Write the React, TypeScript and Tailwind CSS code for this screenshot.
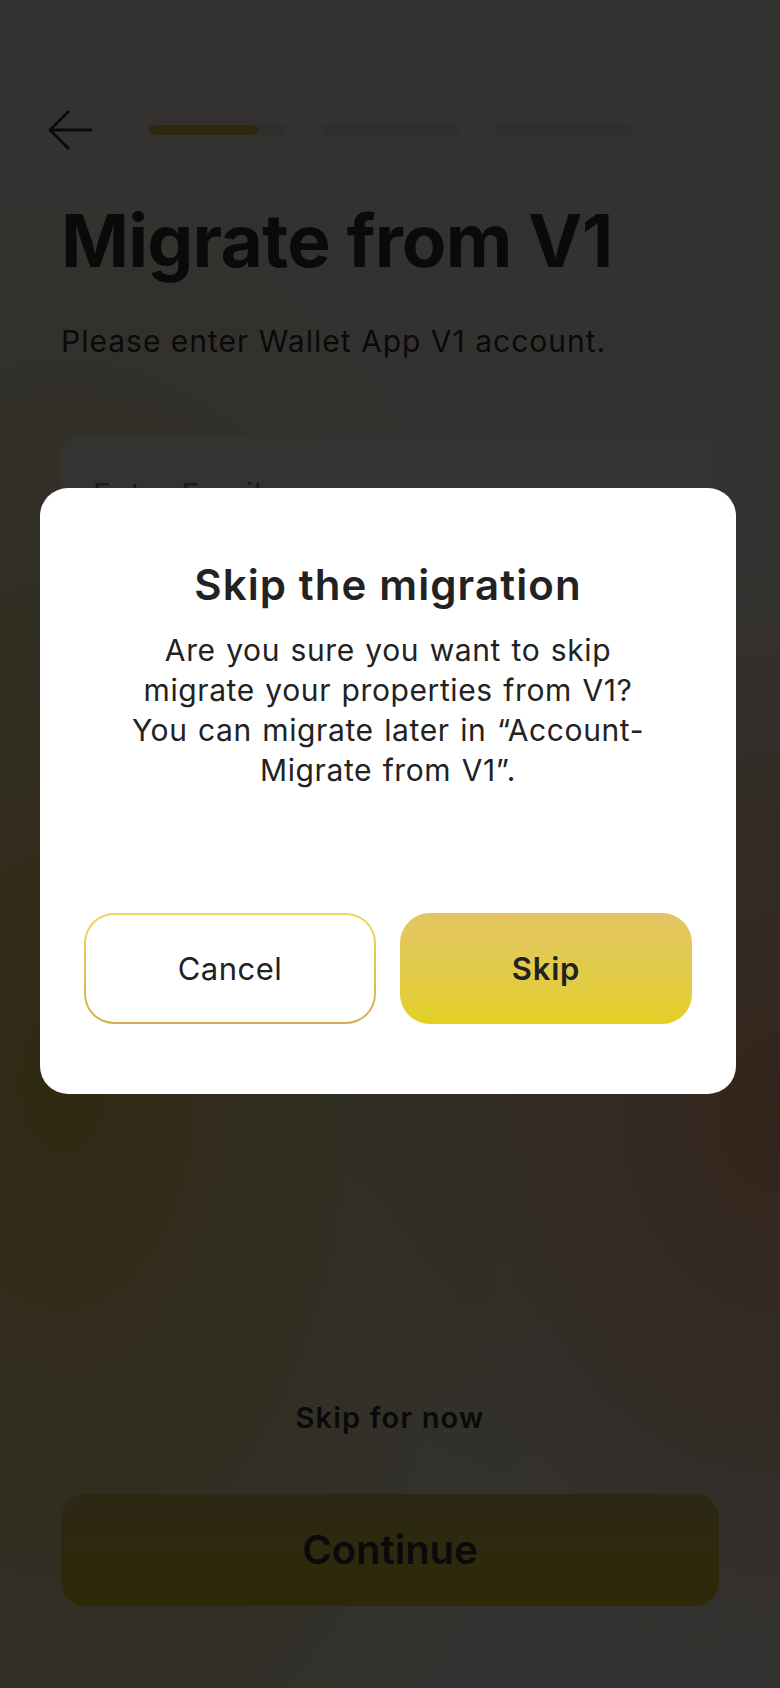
const steps = [0.8, 0, 0];

function BackArrow() {
    return (
        <svg width="46" height="40" viewBox="0 0 46 40" fill="none" className="text-[#333]">
            <path
                d="M44 20H3M3 20L21 2M3 20L21 38"
                stroke="currentColor"
                strokeWidth="3"
                strokeLinecap="round"
                strokeLinejoin="round"
            />
        </svg>
    );
}

function ProgressBar({ value }: { value: number }) {
    return (
        <div className="h-[10px] w-[139px] rounded-full bg-[#e6e6e6] overflow-hidden">
            <div className="h-full rounded-full bg-[#e9c650]" style={{ width: `${value * 100}%` }} />
        </div>
    );
}

function SkipDialog() {
    return (
        <div className="absolute inset-0 bg-black/80 flex justify-center items-start pt-[488px] pl-[40px] pr-[44px]">
            <div className="w-full bg-white rounded-[28px] pt-[72px] pb-[70px] px-[44px] flex flex-col items-center">
                <h2 className="text-[42px] leading-[1.2] font-semibold tracking-[1.1px] text-[#222]">
                    Skip the migration
                </h2>
                <p className="mt-[20px] text-[30px] leading-[40px] tracking-[0.6px] [word-spacing:1.5px] text-[#222] text-center">
                    Are you sure you want to skip
                    <br />
                    migrate your properties from V1?
                    <br />
                    You can migrate later in “Account-
                    <br />
                    Migrate from V1”.
                </p>
                <div className="mt-[123px] w-full grid grid-cols-2 gap-[24px]">
                    <div className="rounded-[30px] p-[2px] bg-linear-to-b from-[#f0d860] to-[#d2b04e]">
                        <button className="w-full h-[107px] rounded-[28px] bg-white text-[31px] tracking-[0.5px] text-[#222]">
                            Cancel
                        </button>
                    </div>
                    <button className="h-[111px] rounded-[30px] bg-linear-to-b from-[#e2c563] to-[#e3d021] text-[31px] font-semibold tracking-[0.8px] text-[#222]">
                        Skip
                    </button>
                </div>
            </div>
        </div>
    );
}

export default function App() {
    return (
        <div className="relative h-[1688px] overflow-hidden font-['Inter',sans-serif] bg-[#fcfaf1] bg-[radial-gradient(ellipse_520px_900px_at_8%_64%,#f0d060_0%,rgba(240,208,96,0)_100%),radial-gradient(ellipse_440px_560px_at_100%_66%,#ffb784_0%,rgba(255,183,132,0)_100%)]">
            <div className="h-full flex flex-col pt-[108px] pb-[82px] px-[61px]">
                <div className="h-[44px] flex items-center">
                    <div className="-ml-[14px]">
                        <BackArrow />
                    </div>
                    <div className="ml-[55px] flex gap-[34px]">
                        {steps.map((s, i) => (
                            <ProgressBar key={i} value={s} />
                        ))}
                    </div>
                </div>

                <h1 className="mt-[45px] text-[73px] leading-[1.2] font-bold tracking-[-0.8px] text-[#333]">
                    Migrate from V1
                </h1>
                <p className="mt-[38px] text-[30px] leading-[1.2] tracking-[1px] text-[#333]">
                    Please enter Wallet App V1 account.
                </p>

                <div className="mt-[76px] h-[112px] rounded-[20px] bg-[#fffdf8] flex items-center px-[32px]">
                    <span className="mt-[8px] text-[30px] tracking-[1px] text-[#8a8a8a]">Enter Email</span>
                </div>

                <div className="mt-auto flex flex-col items-center">
                    <button className="text-[29px] font-semibold tracking-[1.2px] text-[#333]">Skip for now</button>
                    <button className="mt-[55px] w-full h-[112px] rounded-[24px] bg-linear-to-b from-[#e2c563] to-[#e3d021] text-[40px] font-semibold text-[#333]">
                        Continue
                    </button>
                </div>
            </div>

            <SkipDialog />
        </div>
    );
}
